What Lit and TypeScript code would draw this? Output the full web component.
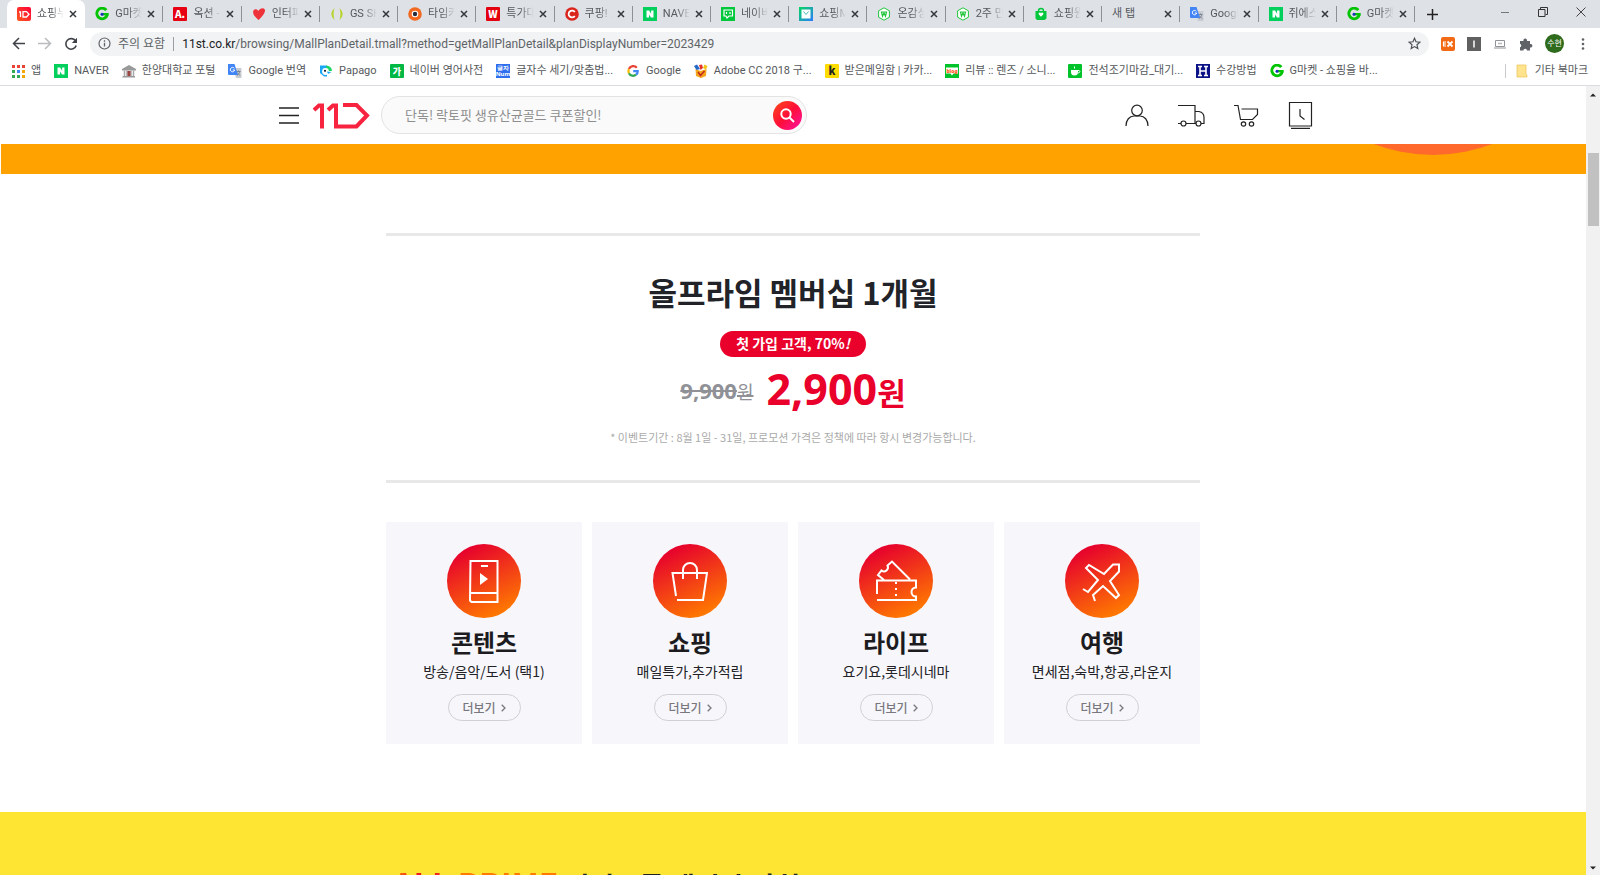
import { LitElement, html, svg, css, nothing } from "lit";
import { customElement, property } from "lit/decorators.js";
import { classMap } from "lit/directives/class-map.js";

const letterTile = (fill: string, letter: string, ink = "#fff", size = 11) => svg`
  <rect width="14" height="14" rx="1" fill=${fill} />
  <text x="7" y="11" text-anchor="middle" font-size=${size} font-weight="900"
    font-family="'Noto Sans CJK KR', sans-serif" fill=${ink}>${letter}</text>`;

const naverTile = svg`
  <rect width="14" height="14" fill="#03cf5d" />
  <path d="M3.5 3.5h2.6l2 3.2V3.5h2.4v7H8L6 7.4v3.1H3.5z" fill="#fff" />`;

const gmarket = svg`
  <path d="M11.300 3.200A5.300 5.300 0 1 0 12.300 7.600" fill="none" stroke="#00c400" stroke-width="2.800" />
  <path d="M6.500 7.200h7.200" stroke="#00c400" stroke-width="2.400" />
  <circle cx="7" cy="7.200" r="1.500" fill="#1a2fc0" />`;

const translate = svg`
  <path d="M5 4h8.500v10H8z" fill="#c9ccd1" />
  <path d="M8.500 7.500h4M10.500 6.500v1M9 11.500c1.500-1 2.500-2.200 2.800-4M9.300 8.500c.8 1.500 1.600 2.300 3 3" stroke="#6b7785" stroke-width=".8" fill="none" />
  <path d="M0 0h6.500l3.500 11H1a1 1 0 0 1-1-1z" fill="#4285f4" />
  <path d="M6.300 4.300A2.200 2.200 0 1 0 6.700 6H4.700" fill="none" stroke="#fff" stroke-width="1" />`;

const webHex = svg`
  <path d="M7 .8 12.400 3.800v6.400L7 13.200 1.600 10.200V3.800z" fill="#fff" stroke="#21c63b" stroke-width="1" />
  <path d="M3.800 5h6.400M4.500 5l1 4.200L7 6l1.500 3.200 1-4.200" fill="none" stroke="#21c63b" stroke-width="1.200" />`;

const icons: Record<string, unknown> = {
  eleven: svg`
    <defs><linearGradient id="e" x1="0" y1="1" x2="1" y2="0"><stop stop-color="#ff5a1f" /><stop offset="1" stop-color="#ff0038" /></linearGradient></defs>
    <rect width="14" height="14" rx="2" fill="url(#e)" />
    <path d="M2 5h1.500v5M6 10V4.600h3.500L12 7.200 9.500 10z" fill="none" stroke="#fff" stroke-width="1.300" />`,
  gmarket,
  auction: letterTile("#e60012", "A.", "#fff", 10),
  heart: svg`<path d="M6.500 13C2 9 .8 6.800 1.200 4.300 1.700 1.700 5 1.500 6.300 4 8 1 11.500.600 12.800 2.400 14 5 10 10 6.500 13z" fill="#ee3239" />`,
  gs: svg`<path d="M4.500 1Q-2 7 4.500 13Q2.800 7 4.500 1zM9.500 1Q16 7 9.500 13Q11.200 7 9.500 1z" fill="#b9d432" />`,
  timer: svg`<circle cx="7" cy="7" r="6.800" fill="#f26a21" /><circle cx="7" cy="7" r="3.300" fill="#fff" /><circle cx="7" cy="7" r="2.200" fill="#252a3d" />`,
  wemake: letterTile("#e3000f", "W", "#fff", 10),
  coupang: svg`<circle cx="7" cy="7" r="6.800" fill="#d9251c" /><path d="M9.800 5A3.400 3.400 0 1 0 9.800 9" fill="none" stroke="#fff" stroke-width="1.800" />`,
  naver: naverTile,
  talk: svg`<rect width="14" height="14" fill="#00c73c" /><path d="M3 3h8.500v6H8l-2 2-1-2H3z" fill="none" stroke="#fff" stroke-width="1.200" /><path d="M5.500 5v2M9 5v2" stroke="#fff" stroke-width="1.200" />`,
  shopN: svg`<defs><linearGradient id="sn" x2="1" y2="1"><stop stop-color="#05d65d" /><stop offset="1" stop-color="#2e7bff" /></linearGradient></defs><rect width="14" height="14" fill="url(#sn)" /><path d="M2.500 2.500h9v9h-9z" fill="#fff" /><path d="m4.500 4.500 2.500 3 2.500-3" fill="none" stroke="#4cbcc4" />`,
  hex: webHex,
  bag: svg`<path d="M1.500 4h11v7.500l-2 1.500H3l-1.500-1.500z" fill="#00c73c" /><path d="M4.500 4a2.500 2.500 0 0 1 5 0" fill="none" stroke="#00c73c" stroke-width="1.400" /><path d="M7 9.800 4.800 7.600a1.300 1.300 0 0 1 2.200-1.400 1.300 1.300 0 0 1 2.200 1.400z" fill="#fff" />`,
  translate,
  apps: svg`${[1, 6, 11].map((y, r) => [1, 6, 11].map((x, c) => svg`<rect x=${x} y=${y} width="3" height="3" fill=${["#ea4335", "#ea4335", "#ea4335", "#34a853", "#4285f4", "#f2a600", "#34a853", "#34a853", "#f2a600"][r * 3 + c]} />`))}`,
  campus: svg`<path d="M0 5 7 1l7 4v1.500H0zM1 12h12v1.500H0z" fill="#999" /><path d="M2.500 6.500V12M5 6.500V12M9 6.500V12M11.500 6.500V12" stroke="#a8a8a8" stroke-width="1.500" /><path d="M5.500 7h3v5h-3z" fill="#9c4440" />`,
  papago: svg`<path d="M1 1.500h7v11H5L1 9z" fill="#1ba7f5" /><path d="M7 1.500a6 5.500 0 0 1 6 5.500H8z" fill="#1bd760" /><circle cx="6.500" cy="7.500" r="3.400" fill="#fff" /><circle cx="6" cy="6.800" r="1.100" fill="#123" /><path d="m8 7.500 4.500.5L9 10z" fill="#1ba7f5" />`,
  dict: letterTile("#00b843", "가", "#fff", 9),
  count: svg`<rect width="14" height="14" fill="#2f6fed" /><text x="7" y="6" text-anchor="middle" font-size="6" font-weight="700" font-family="'Noto Sans', sans-serif" fill="#fff">글자</text><text x="7" y="12" text-anchor="middle" font-size="6" font-weight="700" font-family="'Noto Sans', sans-serif" fill="#fff">Num</text>`,
  google: svg`<g fill="none" stroke-width="2.300"><path d="M10.800 3.700A4.700 4.700 0 0 0 2.900 5" stroke="#ea4335" /><path d="M2.900 5a4.700 4.700 0 0 0 0 4.200" stroke="#fbbc05" /><path d="M2.900 9.200a4.700 4.700 0 0 0 7.200 1.500" stroke="#34a853" /><path d="M10.100 10.700A4.500 4.500 0 0 0 11.700 7.100H7.200" stroke="#4285f4" /></g>`,
  adobe: svg`<path d="m1.500 5 5 2 6-2-.5 7-5 2-5-2z" fill="#f4a51c" /><path d="m0 2 3-1.500L6 5 2.500 6z" fill="#2468c7" /><path d="m5 1 3-.500L9 4 6.500 6z" fill="#e5322d" /><path d="m9 4 1.500-3.500L13.500 2 12 5.500z" fill="#f2c318" /><path d="m4 8 2.500 3.500L10.500 7" fill="none" stroke="#c22a20" stroke-width="1.500" />`,
  kakao: letterTile("#ffdc00", "k", "#222", 11),
  blog: svg`<rect width="14" height="14" fill="#00c32b" /><path d="M1 3.500h12v6H8.500L7 11.500 5.500 9.500H1z" fill="#fff" /><text x="7" y="8.500" text-anchor="middle" font-size="5" font-weight="900" font-family="'Noto Sans', sans-serif" fill="#ff5c1a">blog</text>`,
  cafe: svg`<rect width="14" height="14" rx="1" fill="#00c32b" /><path d="M3 6h7v2a3.500 3.500 0 0 1-7 0z" fill="#fff" /><path d="M10 6.500c2.500-.5 2.500 2.500 0 2.500" fill="none" stroke="#fff" /><path d="M6.500 2.500v2" stroke="#fff" />`,
  hanyang: svg`<rect width="14" height="14" fill="#0b1387" /><path d="M2 2.500h4M8 2.500h4M2 11.500h4M8 11.500h4M4 2.500v9M10 2.500v9M4 7h6" stroke="#fff" stroke-width="1.600" />`,
  folder: svg`<path d="M2 1h9v9l1 1v2H2z" fill="#ffe38d" stroke="#edc85f" stroke-width=".8" />`,
};

const icon = (name: string) => html`<svg class="icon" viewBox="0 0 14 14" aria-hidden="true">${icons[name]}</svg>`;

interface Tab { icon?: string; title: string; }

const tabs: Tab[] = [
  { icon: "eleven", title: "쇼핑누리" },
  { icon: "gmarket", title: "G마켓 - 쇼핑" },
  { icon: "auction", title: "옥션 - 모바일" },
  { icon: "heart", title: "인터파크" },
  { icon: "gs", title: "GS SHOP" },
  { icon: "timer", title: "타임커머스" },
  { icon: "wemake", title: "특가대표" },
  { icon: "coupang", title: "쿠팡! 쇼핑" },
  { icon: "naver", title: "NAVER" },
  { icon: "talk", title: "네이버톡" },
  { icon: "shopN", title: "쇼핑MY" },
  { icon: "hex", title: "온감상점" },
  { icon: "hex", title: "2주 만에" },
  { icon: "bag", title: "쇼핑윈도" },
  { title: "새 탭" },
  { icon: "translate", title: "Google 번역" },
  { icon: "naver", title: "쥐에스샵" },
  { icon: "gmarket", title: "G마켓 - 쇼핑" },
];

const bookmarks: Tab[] = [
  { icon: "apps", title: "앱" },
  { icon: "naver", title: "NAVER" },
  { icon: "campus", title: "한양대학교 포털" },
  { icon: "translate", title: "Google 번역" },
  { icon: "papago", title: "Papago" },
  { icon: "dict", title: "네이버 영어사전" },
  { icon: "count", title: "글자수 세기/맞춤법..." },
  { icon: "google", title: "Google" },
  { icon: "adobe", title: "Adobe CC 2018 구..." },
  { icon: "kakao", title: "받은메일함 | 카카..." },
  { icon: "blog", title: "리뷰 :: 렌즈 / 소니..." },
  { icon: "cafe", title: "전석조기마감_대기..." },
  { icon: "hanyang", title: "수강방법" },
  { icon: "gmarket", title: "G마켓 - 쇼핑을 바..." },
];

const base = css`
  * { box-sizing: border-box; }
  button, input { font: inherit; color: inherit; border: 0; padding: 0; margin: 0; background: none; }
  a { color: inherit; text-decoration: none; }
  svg { display: block; flex: none; }
`;

@customElement("browser-chrome")
export class BrowserChrome extends LitElement {
  static styles = [base, css`
    :host { display: block; flex: none; font: 11px/16px Roboto, "Noto Sans CJK KR", sans-serif; color: #55585c; border-bottom: 1px solid #dadce0; background: #fff; }
    .icon { width: 14px; height: 14px; }
    .strip { display: flex; height: 28px; background: #dee1e6; padding-left: 7px; }
    .tabs { display: flex; flex: 0 1 1408px; min-width: 0; }
    .tab { flex: 1 1 0; min-width: 0; display: flex; align-items: center; padding: 0 8px 0 10px; position: relative; }
    .tab::after { content: ""; position: absolute; right: 0; top: 6px; height: 16px; width: 1px; background: #8d9095; }
    .tab.active { background: #fff; border-radius: 7px 7px 0 0; }
    .tab.active::after { display: none; }
    .pick { display: flex; align-items: center; gap: 6px; flex: 1; min-width: 0; height: 28px; }
    .title { flex: 1; min-width: 0; text-align: left; white-space: nowrap; overflow: hidden; mask-image: linear-gradient(90deg, #000 50%, transparent); }
    .title.full { mask-image: none; }
    .close { margin-left: 5px; }
    .new { padding: 0 12px; }
    .window { display: flex; align-items: center; gap: 28px; margin-left: auto; padding: 0 14px 4px 0; }
    .toolbar { display: flex; align-items: center; height: 31px; padding: 0 10px 0 12px; }
    .nav { display: flex; gap: 12px; flex: none; margin-right: 12px; }
    .omnibox { flex: 1; min-width: 0; display: flex; align-items: center; height: 24px; border-radius: 12px; background: #f1f3f4; padding: 0 8px; font-size: 12px; color: #5f6368; }
    .warn { display: flex; align-items: center; gap: 7px; padding-right: 8px; border-right: 1px solid #9a9da1; margin-right: 8px; line-height: 14px; flex: none; }
    .host { color: #202124; }
    .url { flex: 1; min-width: 0; outline: 0; }
    .ext { display: flex; align-items: center; gap: 12px; margin-left: 12px; flex: none; }
    .avatar { width: 19px; height: 19px; border-radius: 50%; background: #2e6b1c; color: #fff; font-size: 8px; line-height: 18px; text-align: center; }
    .marks { display: flex; align-items: center; height: 26px; padding: 0 12px 3px 11px; gap: 13px; white-space: nowrap; }
    .mark { display: flex; align-items: center; gap: 6px; height: 20px; }
    .other { margin-left: auto; border-left: 1px solid #c8cacd; padding-left: 9px; height: 14px; }
  `];

  render() {
    return html`
      <div class="strip">
        <div class="tabs">
          ${tabs.map((t, i) => html`
            <div class=${classMap({ tab: true, active: i === 0 })}>
              <button class="pick">
                ${t.icon ? icon(t.icon) : nothing}
                <span class=${classMap({ title: true, full: !t.icon })}>${t.title}</span>
              </button>
              <button class="close" aria-label="탭 닫기">
                <svg width="8" height="8" viewBox="0 0 8 8"><path d="m1 1 6 6M7 1 1 7" stroke="#34373b" stroke-width="1.500" /></svg>
              </button>
            </div>`)}
        </div>
        <button class="new" aria-label="새 탭 열기"><svg width="11" height="11" viewBox="0 0 11 11"><path d="M5.500 0v11M0 5.500h11" stroke="#222" stroke-width="1.500" /></svg></button>
        <div class="window">
          <button aria-label="최소화"><svg width="10" height="10" viewBox="0 0 10 10"><path d="M1 5.500h8" stroke="#777" /></svg></button>
          <button aria-label="이전 크기로"><svg width="10" height="10" viewBox="0 0 10 10"><path d="M.5 2.500h6.500v7H.5zM2.500 2V.500h7V7.500H7.500" fill="none" stroke="#333" /></svg></button>
          <button aria-label="닫기"><svg width="10" height="10" viewBox="0 0 10 10"><path d="m.5.500 9 9M9.500.500l-9 9" stroke="#444" /></svg></button>
        </div>
      </div>
      <div class="toolbar">
        <div class="nav">
          <button aria-label="뒤로"><svg width="13" height="13" viewBox="0 0 13 13"><path d="M13 6.500H1.500M7 1 1.500 6.500 7 12" fill="none" stroke="#3f4347" stroke-width="1.500" /></svg></button>
          <button aria-label="앞으로"><svg width="15" height="13" viewBox="0 0 15 13"><path d="M1 6.500h12M8 1l5.500 5.500L8 12" fill="none" stroke="#b9bbbe" stroke-width="1.500" /></svg></button>
          <button aria-label="새로고침"><svg width="14" height="14" viewBox="0 0 14 14"><path d="M11.600 4A5.300 5.300 0 1 0 12.200 8.500" fill="none" stroke="#3f4347" stroke-width="1.600" /><path d="M13 .800v5.200H7.800z" fill="#3f4347" /></svg></button>
        </div>
        <div class="omnibox">
          <span class="warn">
            <svg width="13" height="13" viewBox="0 0 13 13"><circle cx="6.500" cy="6.500" r="5.500" fill="none" stroke="#5f6368" stroke-width="1.200" /><path d="M6.500 5.800v3.700M6.500 3.300v1.400" stroke="#5f6368" stroke-width="1.300" /></svg>
            주의 요함
          </span>
          <label class="host" for="url">11st.co.kr</label>
          <input id="url" class="url" .value=${"/browsing/MallPlanDetail.tmall?method=getMallPlanDetail&planDisplayNumber=2023429"} />
          <button aria-label="북마크 추가"><svg width="13" height="13" viewBox="0 0 13 13"><path d="m6.500 1.300 1.500 3.500 3.900.400-2.900 2.600.8 3.800-3.300-2-3.300 2 .8-3.800-2.900-2.600 3.900-.400z" fill="none" stroke="#4d5156" stroke-width="1.200" /></svg></button>
        </div>
        <div class="ext">
          <button aria-label="확장 프로그램 EX"><svg width="14" height="14" viewBox="0 0 14 14"><rect width="14" height="14" rx="2" fill="#f36a16" /><path d="M2 5h3M2 7h3M2 9h3M2.500 5v4" stroke="#fff" stroke-width="1.200" /><path d="m6.500 4.500 5 5M11.500 4.500l-5 5" stroke="#fff" stroke-width="1.800" /></svg></button>
          <button aria-label="확장 프로그램 I"><svg width="14" height="14" viewBox="0 0 14 14"><rect width="14" height="14" fill="#606060" /><path d="M7 3.500v7" stroke="#fff" stroke-width="1.500" /></svg></button>
          <button aria-label="화면 캡처"><svg width="14" height="14" viewBox="0 0 14 14"><path d="M2.500 3.500h9v6h-9zM1 11h12" fill="none" stroke="#909397" /><path d="M5.500 6.500h1M7.500 6.500h1" stroke="#777" stroke-width="1.500" /></svg></button>
          <button aria-label="확장 프로그램"><svg width="14" height="14" viewBox="0 0 14 14"><path d="M1 4h3.500a1.800 1.800 0 1 1 3.400 0H11v3.100a1.800 1.800 0 1 1 0 3.400V13.500H8a1.800 1.800 0 0 0-3.600 0H1v-3.200a1.900 1.900 0 0 0 0-3.600z" fill="#5f6368" /></svg></button>
          <button class="avatar" aria-label="프로필">수현</button>
          <button aria-label="메뉴"><svg width="14" height="14" viewBox="0 0 14 14"><circle cx="7" cy="2.500" r="1.300" fill="#5f6368" /><circle cx="7" cy="7" r="1.300" fill="#5f6368" /><circle cx="7" cy="11.500" r="1.300" fill="#5f6368" /></svg></button>
        </div>
      </div>
      <nav class="marks">
        ${bookmarks.map((b) => html`<a class="mark" href="#">${icon(b.icon!)}${b.title}</a>`)}
        <a class="mark other" href="#">${icon("folder")}기타 북마크</a>
      </nav>`;
  }
}

@customElement("benefit-card")
export class BenefitCard extends LitElement {
  @property() heading = "";
  @property() detail = "";
  @property() glyph = "";

  static styles = [base, css`
    :host { display: flex; flex-direction: column; align-items: center; background: #f7f6fb; padding: 22px 0 23px; text-align: center; }
    .disc { width: 74px; height: 74px; border-radius: 50%; background: linear-gradient(155deg, #e6002d 12%, #ff7a00 88%); margin-bottom: 6px; }
    h3 { margin: 0 0 1px; font-size: 24px; line-height: 36px; font-weight: 700; color: #1b1b20; }
    p { margin: 0 0 13px; font-size: 14px; line-height: 20px; color: #222226; }
    .more { display: flex; align-items: center; justify-content: center; gap: 5px; width: 73px; height: 27px; border: 1px solid #cfd0d6; border-radius: 14px; font-size: 12px; line-height: 16px; font-weight: 500; color: #77777d; }
  `];

  private art() {
    switch (this.glyph) {
      case "phone":
        return svg`<path d="M23.500 17h27v41h-26l-1.500-1.500zM23 49h27M34 22h7" /><path d="m33 29 8 6-8 6z" fill="#fff" stroke="none" />`;
      case "bag":
        return svg`<path d="M23 52 19.500 29h34.500L50 56H24M30 35v-9a7 7 0 0 1 14 0v9" />`;
      case "ticket":
        return svg`<path d="M18 50V36.500h39v7a4.500 4.500 0 0 0 0 9V56H18M25 36l-6-5 3.500-4.500a4 4 0 0 0 6-5l4.500-4 18 18" /><path d="M37 38v17" stroke-dasharray="2 4" />`;
      default:
        return svg`<path d="M18 45l5 3 10-12L21 24l3-3 15 9 9-9.500h6v7L45 37l9 14-3 3-13-12-10 9 2 6" />`;
    }
  }

  render() {
    return html`
      <svg class="disc" viewBox="0 0 74 74" fill="none" stroke="#fff" stroke-width="2" aria-hidden="true">${this.art()}</svg>
      <h3>${this.heading}</h3>
      <p>${this.detail}</p>
      <a class="more" href="#">더보기<svg width="5" height="8" viewBox="0 0 5 8"><path d="m.7.700 3.300 3.300L.7 7.300" fill="none" stroke="#77777d" stroke-width="1.300" /></svg></a>`;
  }
}

@customElement("shop-header")
export class ShopHeader extends LitElement {
  static styles = [base, css`
    :host { display: block; background: #fff; }
    .bar { display: flex; align-items: center; max-width: 1040px; height: 58px; margin: 0 auto; padding-left: 6px; }
    .logo { margin: 0 11px 0 14px; }
    .search { display: flex; align-items: center; flex: 0 1 426px; height: 38px; border: 1px solid #e3e3e3; border-radius: 19px; background: #fafafa; padding: 0 4px 0 23px; }
    .field { flex: 1; min-width: 0; font-size: 13px; line-height: 20px; outline: 0; }
    .field::placeholder { color: #8e8e8e; opacity: 1; }
    .go { width: 29px; height: 29px; border-radius: 50%; background: linear-gradient(135deg, #ff4a18, #ff0f38 50%, #ff12a8); display: grid; place-items: center; }
    .links { display: flex; align-items: center; gap: 29px; margin-left: auto; }
    .links svg { fill: none; stroke: #222; stroke-width: 1.2; }
  `];

  render() {
    return html`
      <header class="bar">
        <button aria-label="메뉴"><svg width="20" height="17" viewBox="0 0 20 17"><path d="M0 1h20M0 8.500h20M0 16h20" stroke="#222" stroke-width="1.400" /></svg></button>
        <a class="logo" href="#" aria-label="11번가">
          <svg width="57" height="27" viewBox="0 0 57 27" fill="none" stroke="#f8233f" stroke-width="4">
            <path d="M1 8 6 3.500h3V26.500M15 8l5-4.500h3V24.500h20.500L54 13.500 43.500 3H30" />
          </svg>
        </a>
        <form class="search" @submit=${(e: Event) => e.preventDefault()}>
          <input class="field" aria-label="통합검색" placeholder="단독! 락토핏 생유산균골드 쿠폰할인!" />
          <button class="go" aria-label="검색"><svg width="15" height="15" viewBox="0 0 15 15"><circle cx="6" cy="6" r="4.700" fill="none" stroke="#fff" stroke-width="2" /><path d="m9.500 9.500 4.500 4.500" stroke="#fff" stroke-width="2" /></svg></button>
        </form>
        <nav class="links">
          <a href="#" aria-label="마이페이지"><svg width="24" height="23" viewBox="0 0 24 23"><circle cx="12" cy="6.500" r="5.300" /><path d="M1 22c0-6 3.500-10 8-10h6c4.500 0 8 4 8 10" /></svg></a>
          <a href="#" aria-label="배송조회"><svg width="27" height="23" viewBox="0 0 27 23"><path d="M0 1.500h17v18M17 7.500h4q5 1 5 6v6h-3M0 19.500h3M8 19.500h10" /><circle cx="5.500" cy="19.500" r="2.500" /><circle cx="20.500" cy="19.500" r="2.500" /></svg></a>
          <a href="#" aria-label="장바구니"><svg width="25" height="23" viewBox="0 0 25 23"><path d="M0 1.500h4L6.500 15.500H18.500L23.500 10.500V5H7.500" /><circle cx="9.500" cy="20" r="2.200" /><circle cx="17.500" cy="20" r="2.200" /></svg></a>
          <a href="#" aria-label="최근 본 상품"><svg width="25" height="28" viewBox="0 0 25 28"><path d="M1.500 1.500h22v23.500h-22zM3 27.300h19M12 8v7l4.500 3.500" /></svg></a>
        </nav>
      </header>`;
  }
}

@customElement("app-root")
export class AppRoot extends LitElement {
  static styles = [base, css`
    :host { display: flex; flex-direction: column; height: 100vh; overflow: hidden; background: #fff; font-family: "Noto Sans CJK KR", sans-serif; }
    .view { flex: 1; min-height: 0; display: flex; }
    .page { flex: 1; min-width: 0; overflow: hidden; }
    .scroll { flex: none; width: 14px; background: #f1f1f1; display: flex; flex-direction: column; justify-content: space-between; align-items: center; padding: 7px 0 5px; }
    .thumb { width: 11px; height: 73px; background: #c1c1c1; margin: 56px 0 auto; }
    .banner { position: relative; height: 30px; overflow: hidden; background: #ffa200; margin-left: 1px; }
    .ball { position: absolute; right: -12px; bottom: 19px; width: 330px; height: 330px; border-radius: 50%; background: #ff6a2c; }
    .wrap { max-width: 814px; margin: 0 auto; }
    .offer { margin-top: 59px; border: solid #e8e8e8; border-width: 3px 0; padding: 33px 0 34px; display: flex; flex-direction: column; align-items: center; }
    h1 { margin: 0; font-size: 31px; line-height: 46px; font-weight: 700; color: #222328; }
    .badge { margin-top: 16px; height: 26px; border-radius: 13px; padding: 0 16px; background: #e9002b; color: #fff; font-size: 14px; line-height: 25px; font-weight: 700; }
    .price { display: flex; align-items: center; gap: 13px; height: 68px; font-family: "Noto Sans", "Noto Sans CJK KR", sans-serif; font-weight: 700; }
    .was { font-size: 22px; line-height: 30px; color: #8f9197; text-decoration: line-through; }
    .was .won { font-size: 18px; font-weight: 400; }
    .now { font-size: 43px; line-height: 58px; font-weight: 700; color: #e9002b; }
    .now .won { font-size: 31px; }
    .note { margin: 3px 0 0; font-size: 11px; line-height: 18px; color: #aaa; }
    .cards { display: grid; grid-template-columns: repeat(4, 1fr); gap: 10px; margin-top: 39px; }
    .more { margin-top: 68px; background: #ffe533; height: 120px; padding-top: 49px; }
    h2 { margin: 0; padding-left: 7px; font-size: 27px; line-height: 44px; font-weight: 700; color: #222; }
    .brand { font-size: 32px; background: linear-gradient(90deg, #ff7a00, #e9002b 20%, #ff7a00 40%); background-clip: text; -webkit-background-clip: text; color: transparent; }
  `];

  render() {
    return html`
      <browser-chrome></browser-chrome>
      <div class="view">
        <main class="page">
          <shop-header></shop-header>
          <div class="banner"><div class="ball"></div></div>
          <div class="wrap">
            <section class="offer">
              <h1>올프라임 멤버십 1개월</h1>
              <span class="badge">첫 가입 고객, 70%<i>!</i></span>
              <div class="price">
                <s class="was">9,900<span class="won">원</span></s>
                <strong class="now">2,900<span class="won">원</span></strong>
              </div>
              <p class="note">* 이벤트기간 : 8월 1일 - 31일, 프로모션 가격은 정책에 따라 항시 변경가능합니다.</p>
            </section>
            <section class="cards">
              <benefit-card glyph="phone" heading="콘텐츠" detail="방송/음악/도서 (택1)"></benefit-card>
              <benefit-card glyph="bag" heading="쇼핑" detail="매일특가,추가적립"></benefit-card>
              <benefit-card glyph="ticket" heading="라이프" detail="요기요,롯데시네마"></benefit-card>
              <benefit-card glyph="plane" heading="여행" detail="면세점,숙박,항공,라운지"></benefit-card>
            </section>
          </div>
          <section class="more">
            <div class="wrap"><h2><span class="brand">ALL PRIME</span> 서비스를 매시 추가히</h2></div>
          </section>
        </main>
        <div class="scroll" aria-hidden="true">
          <svg width="6" height="4" viewBox="0 0 6 4"><path d="M0 3.500 3 .500l3 3z" fill="#222" /></svg>
          <div class="thumb"></div>
          <svg width="6" height="4" viewBox="0 0 6 4"><path d="M0 .500 3 3.500l3-3z" fill="#222" /></svg>
        </div>
      </div>`;
  }
}
